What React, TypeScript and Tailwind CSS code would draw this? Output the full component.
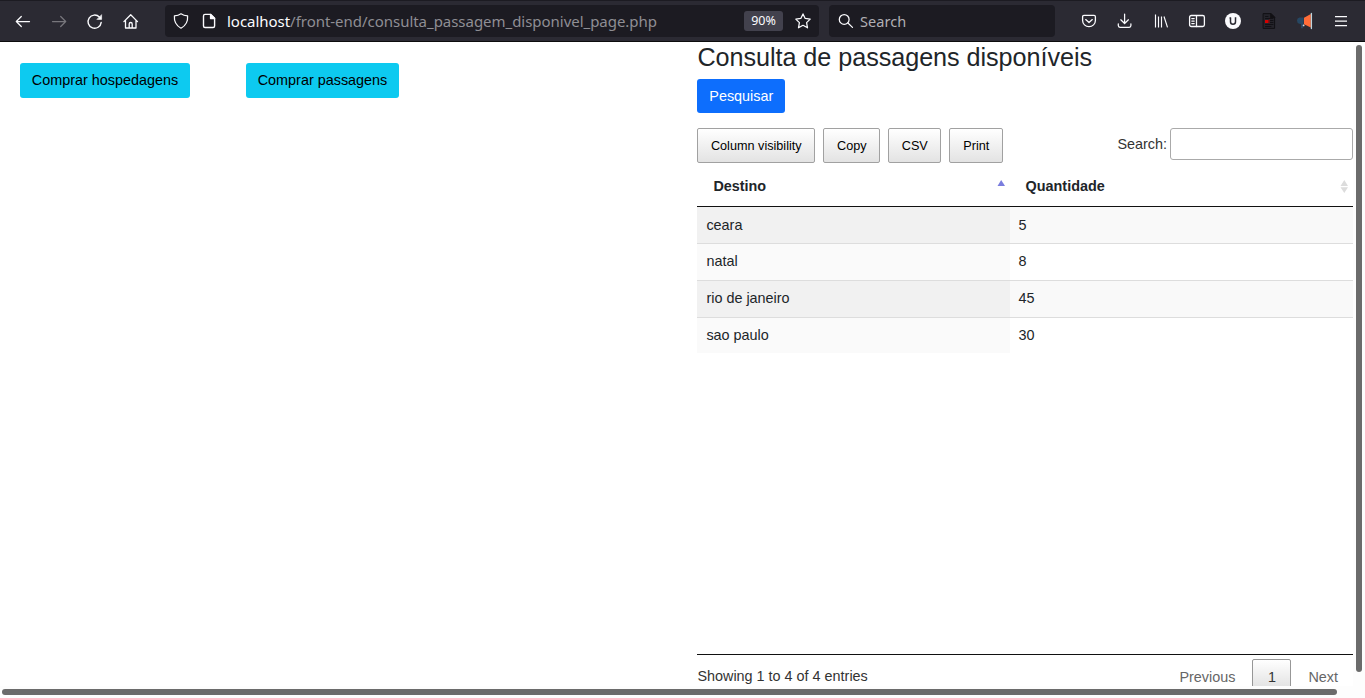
import type { ReactNode } from 'react';

const rows = [
  { destino: 'ceara', quantidade: 5 },
  { destino: 'natal', quantidade: 8 },
  { destino: 'rio de janeiro', quantidade: 45 },
  { destino: 'sao paulo', quantidade: 30 },
];

function Icon({ children, className = '' }: { children: ReactNode; className?: string }) {
  return (
    <svg
      width="16"
      height="16"
      viewBox="0 0 16 16"
      fill="none"
      stroke="currentColor"
      strokeWidth="1.25"
      strokeLinecap="round"
      strokeLinejoin="round"
      className={`shrink-0 overflow-visible ${className}`}
    >
      {children}
    </svg>
  );
}

function BrowserBar() {
  return (
    <header className="flex h-[42px] shrink-0 items-center border-y border-t-[#1c1b22] border-b-[#0c0c0d] bg-[#2b2a33] font-['Noto_Sans',sans-serif] text-[#fbfbfe]">
      <nav className="flex w-[165px] gap-5 pl-[15px]">
        <Icon>
          <path d="M14.5 8.5H1.5M6.3 3.5L1.3 8.5L6.3 13.5" />
        </Icon>
        <Icon className="text-[#77767c]">
          <path d="M1.5 8.5H14.5M9.7 3.5L14.7 8.5L9.7 13.5" />
        </Icon>
        <Icon>
          <path d="M14.2 9.4A6.6 6.6 0 1 1 12.4 4.1" strokeWidth="1.4" />
          <path d="M14.6 2V6.4H10.2Z" fill="currentColor" strokeWidth="0.6" />
        </Icon>
        <Icon>
          <path d="M0.9 8.6L7.7 1.8L14.5 8.6M2.5 7.5V15H13V7.5M6.2 14.8V11Q6.2 9.5 7.7 9.5T9.2 11V14.8" strokeWidth="1.3" />
        </Icon>
      </nav>
      <div className="flex h-8 w-[654px] items-center rounded-[4px] bg-[#1c1b22] pl-2">
        <Icon>
          <path d="M8 0.8Q10.6 2.7 14.6 2.9Q15.3 11.3 8 15.2Q0.7 11.3 1.4 2.9Q5.4 2.7 8 0.8Z" />
        </Icon>
        <Icon className="ml-3">
          <path d="M4 1.4H9.8L13.6 5.2V13Q13.6 14.5 12.1 14.5H4Q2.5 14.5 2.5 13V2.9Q2.5 1.4 4 1.4Z" strokeWidth="1.4" />
          <path d="M9.5 1.4V5.5H13.6Z" fill="currentColor" />
        </Icon>
        <div className="ml-[10px] w-[517px] whitespace-nowrap text-[15px] leading-5 tracking-[-0.03px] text-[#8f8e94]">
          <span className="text-[#fbfbfe]">localhost</span>/front-end/consulta_passagem_disponivel_page.php
        </div>
        <span className="flex h-5 w-[39px] items-center justify-center rounded-[3px] bg-[#42414d] text-[12.5px]">90%</span>
        <Icon className="ml-3">
          <path d="M8 0.9L10.2 5.4L15.2 6.1L11.6 9.6L12.5 14.8L8 12.3L3.5 14.8L4.4 9.6L0.8 6.1L5.8 5.4Z" />
        </Icon>
      </div>
      <div className="ml-[10px] flex h-8 w-[226px] items-center rounded-[4px] bg-[#1c1b22] pl-[9px]">
        <Icon>
          <circle cx="6.2" cy="6.4" r="4.9" />
          <path d="M9.9 10L14.5 14.4" />
        </Icon>
        <span className="ml-[6px] text-[14.5px] leading-5 tracking-[0.08px] text-[#b0afb4]">Search</span>
      </div>
      <div className="ml-[26px] flex gap-5">
        <Icon>
          <path d="M3 2.3H13Q14.4 2.3 14.4 3.7V7.5A6.4 6.2 0 0 1 1.6 7.5V3.7Q1.6 2.3 3 2.3ZM4.7 6.6L8 9.6L11.3 6.6" strokeWidth="1.3" />
        </Icon>
        <Icon>
          <path d="M7.6 1V10.3M3.8 6.8L7.6 10.5L11.4 6.8M1.3 10.8V12.6Q1.3 14.3 3 14.3H12.2Q13.9 14.3 13.9 12.6V10.8" />
        </Icon>
        <Icon>
          <path d="M2.5 1.5V14.5M5.5 3.5V14.5M8.5 3.5V14.5M11 3.5L14.5 14.4" strokeWidth="1.15" strokeLinecap="butt" />
        </Icon>
        <Icon>
          <rect x="0.6" y="2.5" width="14.8" height="11" rx="1.7" strokeWidth="1.3" />
          <path d="M7.5 2.5V13.5M2.8 5.5H5.2M2.8 8H5.2M2.8 10.5H5.2" />
        </Icon>
        <Icon>
          <circle cx="8" cy="8" r="8" fill="#fbfbfe" stroke="none" />
          <path d="M5.5 4.5V8.7Q5.5 11.2 8 11.2T10.5 8.7V4.5M4.5 4.9H6M9.8 4.9H11.3" stroke="#2b2a33" strokeWidth="1.5" strokeLinecap="butt" />
        </Icon>
        <Icon>
          <path d="M2.5 0.6H9.8L13.6 4.4V15.4H2.5Z" fill="#24232a" stroke="#111014" strokeWidth="1" />
          <path d="M9.8 0.6V4.4H13.6Z" fill="#111014" stroke="#111014" />
          <path d="M4.5 3.5H7M4.5 5.5H12M9.5 7.5H12M9.5 9.5H12M4.5 11.5H12M4.5 13.5H10" stroke="#111014" strokeWidth="0.9" />
          <rect x="4" y="7" width="3.5" height="3" fill="#d60000" stroke="none" />
          <path d="M8.5 6.5V10" stroke="#6e1015" strokeWidth="0.7" />
        </Icon>
        <Icon>
          <path d="M6.7 4.5H2.5Q0 4.8 0 7.5T2.3 10.7L4 11V15.3H6L6.6 11.3Z" fill="#264763" stroke="none" />
          <path d="M7 4.7L13.8 1V14.5L7 11.2Z" fill="#ff6c38" stroke="none" />
          <path d="M14.4 0.5V15.5" stroke="#bed4dc" strokeWidth="1.3" />
          <circle cx="6.6" cy="12.4" r="0.9" fill="#d7d9dc" stroke="none" />
        </Icon>
        <Icon>
          <path d="M2 3.5H14M2 8H14M2 12.5H14" strokeLinecap="butt" />
        </Icon>
      </div>
    </header>
  );
}

function ToolButton({ label, className }: { label: string; className: string }) {
  return (
    <button className={`h-[35px] rounded-[2px] border border-[#a1a1a1] bg-linear-to-b from-white to-[#e3e3e3] pl-[0.6px] pt-[2px] text-[12.67px] text-black ${className}`}>
      {label}
    </button>
  );
}

function DataTable() {
  return (
    <table className="w-full table-fixed border-separate border-spacing-0 text-left">
      <colgroup>
        <col className="w-[313px]" />
        <col />
      </colgroup>
      <thead>
        <tr className="h-11">
          <th className="border-b border-[#111111] pl-[16.4px] pr-1 pt-[5px]">
            <div className="flex items-center justify-between">
              Destino
              <svg width="9" height="12" viewBox="0 0 9 12" className="mb-[2px]">
                <path d="M0.5 6L4.2 0L8 6Z" fill="#7a7dde" />
              </svg>
            </div>
          </th>
          <th className="border-b border-[#111111] pl-[15.6px] pr-1 pt-[5px]">
            <div className="flex items-center justify-between">
              Quantidade
              <svg width="9" height="13" viewBox="0 0 9 13" className="mb-[2px]">
                <path d="M0.5 6L4.3 0L8 6ZM0.5 7.2H8L4.3 13Z" fill="#dcdcdc" />
              </svg>
            </div>
          </th>
        </tr>
      </thead>
      <tbody className="[&_tr:first-child]:h-9 [&_tr:first-child_td]:border-t-0 [&_tr:first-child_td]:pt-px [&_tr:last-child]:h-9">
        {rows.map((row, index) => (
          <tr key={row.destino} className="h-[37px]">
            <td className={`border-t border-[#dddddd] py-0 pl-[9.4px] ${index % 2 === 0 ? 'bg-[#f1f1f1]' : 'bg-[#fafafa]'}`}>{row.destino}</td>
            <td className={`border-t border-[#dddddd] py-0 pl-[8.6px] ${index % 2 === 0 ? 'bg-[#f9f9f9]' : 'bg-white'}`}>{row.quantidade}</td>
          </tr>
        ))}
      </tbody>
    </table>
  );
}

export default function App() {
  return (
    <div className="flex h-[698px] w-[1365px] flex-col overflow-hidden bg-white font-['Liberation_Sans',Arial,sans-serif] text-[14.4px] leading-[21.6px] text-[#212529]">
      <BrowserBar />
      <div className="flex h-[644px] shrink-0">
        <main className="flex w-[1353px] overflow-hidden">
          <aside className="flex w-[697px] shrink-0 items-start gap-14 pl-5 pt-[21px]">
            <button className="h-[35px] w-[170px] rounded-[3px] bg-[#0dcaf0] text-black">Comprar hospedagens</button>
            <button className="h-[35px] w-[153px] rounded-[3px] bg-[#0dcaf0] text-black">Comprar passagens</button>
          </aside>
          <section className="flex w-[656px] shrink-0 flex-col">
            <h1 className="h-[37px] shrink-0 whitespace-nowrap pl-[0.4px] text-[25.2px] leading-[30px] tracking-[-0.05px]">Consulta de passagens disponíveis</h1>
            <button className="h-[34px] w-[88px] shrink-0 rounded-[3px] bg-[#0d6efd] pl-[0.6px] pt-px text-white">Pesquisar</button>
            <div className="mt-[15px] flex h-[35px] shrink-0 items-start justify-between">
              <div className="flex gap-2">
                <ToolButton label="Column visibility" className="w-[118px]" />
                <ToolButton label="Copy" className="w-[57px]" />
                <ToolButton label="CSV" className="w-[53px]" />
                <ToolButton label="Print" className="w-[54px]" />
              </div>
              <label className="flex items-center gap-[3px] text-[#333333]">
                <span className="pt-[2px]">Search:</span>
                <input className="h-8 w-[183px] rounded-[3px] border border-[#aaaaaa] bg-transparent px-1" />
              </label>
            </div>
            <div className="h-[492px] shrink-0 border-b border-[#111111]">
              <DataTable />
            </div>
            <footer className="flex shrink-0 items-start justify-between text-[#333333]">
              <span className="pl-[0.4px] pt-[11px]">Showing 1 to 4 of 4 entries</span>
              <div className="flex pt-1 text-[#666666]">
                <span className="pl-4 pr-[17px] pt-2">Previous</span>
                <span className="h-9 w-[39px] rounded-[2px] border border-[#979797] bg-linear-to-b from-white to-[#dcdcdc] pt-[7px] text-center text-[#333333]">1</span>
                <span className="pl-[17px] pr-[15px] pt-2">Next</span>
              </div>
            </footer>
          </section>
        </main>
        <div className="w-3 bg-[#fdfdfd] pl-[3px] pt-[3px]">
          <div className="h-[627px] w-[6px] rounded-full bg-[#6b6b6b]" />
        </div>
      </div>
      <div className="h-3 shrink-0 bg-[#fdfdfd] pl-[2px] pt-[3px]">
        <div className="h-[6px] w-[1335px] rounded-full bg-[#6b6b6b]" />
      </div>
    </div>
  );
}
